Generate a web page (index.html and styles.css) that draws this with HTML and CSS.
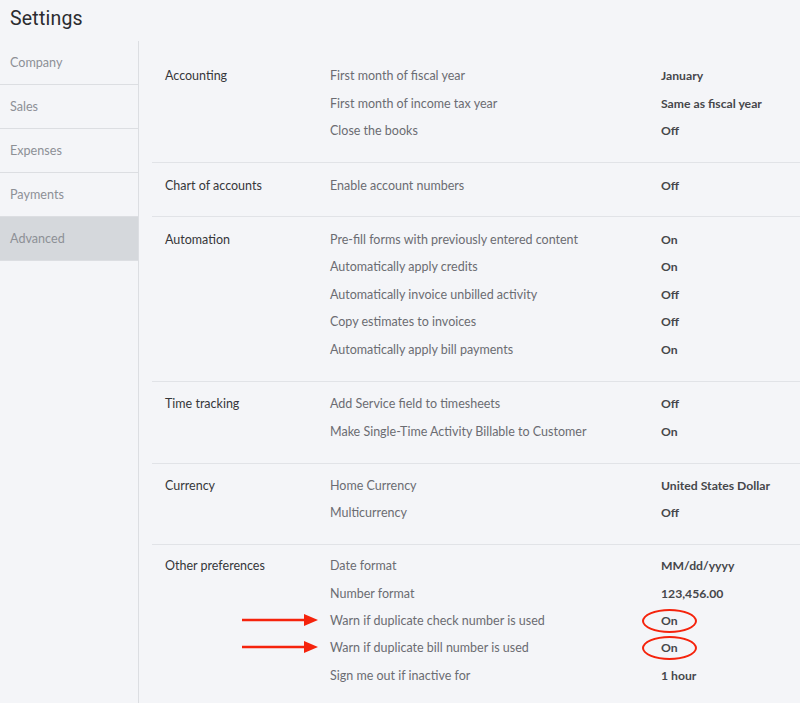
FILE: index.html
```html
<!DOCTYPE html>
<html lang="en">
<head>
<meta charset="utf-8">
<title>Settings</title>
<link rel="stylesheet" href="styles.css">
</head>
<body>
<header class="page-header"><h1 class="page-title">Settings</h1></header>
<div class="layout">
  <nav class="sidebar">
    <a class="nav-item">Company</a>
    <a class="nav-item">Sales</a>
    <a class="nav-item">Expenses</a>
    <a class="nav-item">Payments</a>
    <a class="nav-item active">Advanced</a>
  </nav>
  <main class="content">
    <section class="section">
      <h2 class="section-title">Accounting</h2>
      <div class="rows">
        <div class="row"><span class="row-label">First month of fiscal year</span><span class="row-value">January</span></div>
        <div class="row"><span class="row-label">First month of income tax year</span><span class="row-value">Same as fiscal year</span></div>
        <div class="row"><span class="row-label">Close the books</span><span class="row-value">Off</span></div>
      </div>
    </section>
    <section class="section">
      <h2 class="section-title">Chart of accounts</h2>
      <div class="rows">
        <div class="row"><span class="row-label">Enable account numbers</span><span class="row-value">Off</span></div>
      </div>
    </section>
    <section class="section">
      <h2 class="section-title">Automation</h2>
      <div class="rows">
        <div class="row"><span class="row-label">Pre-fill forms with previously entered content</span><span class="row-value">On</span></div>
        <div class="row"><span class="row-label">Automatically apply credits</span><span class="row-value">On</span></div>
        <div class="row"><span class="row-label">Automatically invoice unbilled activity</span><span class="row-value">Off</span></div>
        <div class="row"><span class="row-label">Copy estimates to invoices</span><span class="row-value">Off</span></div>
        <div class="row"><span class="row-label">Automatically apply bill payments</span><span class="row-value">On</span></div>
      </div>
    </section>
    <section class="section">
      <h2 class="section-title">Time tracking</h2>
      <div class="rows">
        <div class="row"><span class="row-label">Add Service field to timesheets</span><span class="row-value">Off</span></div>
        <div class="row"><span class="row-label">Make Single-Time Activity Billable to Customer</span><span class="row-value">On</span></div>
      </div>
    </section>
    <section class="section">
      <h2 class="section-title">Currency</h2>
      <div class="rows">
        <div class="row"><span class="row-label">Home Currency</span><span class="row-value">United States Dollar</span></div>
        <div class="row"><span class="row-label">Multicurrency</span><span class="row-value">Off</span></div>
      </div>
    </section>
    <section class="section section-other">
      <h2 class="section-title">Other preferences</h2>
      <div class="rows">
        <div class="row"><span class="row-label">Date format</span><span class="row-value">MM/dd/yyyy</span></div>
        <div class="row"><span class="row-label">Number format</span><span class="row-value">123,456.00</span></div>
        <div class="row marked">
          <svg class="arrow" viewBox="0 0 76 14" width="76" height="14" aria-hidden="true"><path d="M0 7H64" stroke="#f5230c" stroke-width="2.6"/><path d="M62 1L76 7L62 13Z" fill="#f5230c"/></svg>
          <span class="row-label">Warn if duplicate check number is used</span><span class="row-value circled">On</span>
        </div>
        <div class="row marked">
          <svg class="arrow" viewBox="0 0 76 14" width="76" height="14" aria-hidden="true"><path d="M0 7H64" stroke="#f5230c" stroke-width="2.6"/><path d="M62 1L76 7L62 13Z" fill="#f5230c"/></svg>
          <span class="row-label">Warn if duplicate bill number is used</span><span class="row-value circled">On</span>
        </div>
        <div class="row"><span class="row-label">Sign me out if inactive for</span><span class="row-value">1 hour</span></div>
      </div>
    </section>
  </main>
</div>
</body>
</html>
```

FILE: styles.css
```css
* { box-sizing: border-box; }

html, body {
  margin: 0;
  height: 100%;
  background: #f4f5f8;
  overflow: hidden;
}

body {
  font-family: Lato, "Open Sans", "Liberation Sans", sans-serif;
  color: #393a3d;
}

.page-header {
  height: 41px;
  padding: 7px 0 0 10px;
}

.page-title {
  margin: 0;
  font-family: Roboto, "Liberation Sans", sans-serif;
  font-weight: 400;
  font-size: 19.5px;
  line-height: 24px;
  color: #2b2c2f;
  letter-spacing: 0.2px;
}

.layout {
  display: flex;
  height: calc(100% - 41px);
}

.sidebar {
  width: 139px;
  flex: none;
  border-right: 1px solid #dcdee2;
  display: flex;
  flex-direction: column;
}

.nav-item {
  height: 44px;
  display: flex;
  align-items: center;
  padding-left: 10px;
  font-size: 12.6px;
  color: #8d9096;
  border-bottom: 1px solid #dcdee2;
}

.nav-item.active {
  background: #d5d8dc;
}

.content {
  flex: 1;
  padding: 13px 0 0 13px;
}

.section {
  display: grid;
  grid-template-columns: 165px 1fr;
  padding: 8px 0 17.5px 13px;
  border-bottom: 1px solid #e1e3e7;
}

.section:last-child {
  border-bottom: none;
}

.section-other {
  padding-top: 7px;
}

.section-other .row,
.section-other .section-title {
  height: 27.3px;
}

.section-title {
  margin: 0;
  height: 27.6px;
  display: flex;
  align-items: center;
  font-size: 12.5px;
  font-weight: 400;
  color: #36373a;
}

.row {
  position: relative;
  height: 27.6px;
  display: grid;
  grid-template-columns: 331px 1fr;
  align-items: center;
  font-size: 12.5px;
}

.row-label {
  color: #6b6c72;
}

.row-value {
  font-weight: 700;
  font-size: 12.2px;
  color: #46474b;
  justify-self: start;
}

.circled {
  position: relative;
}

.circled::after {
  content: "";
  position: absolute;
  left: -19px;
  top: 50%;
  width: 51px;
  height: 20px;
  margin-top: -11.5px;
  border: 2.5px solid #f5230c;
  border-radius: 50%;
}

.arrow {
  position: absolute;
  left: -88px;
  top: 50%;
  margin-top: -7.5px;
}
```
